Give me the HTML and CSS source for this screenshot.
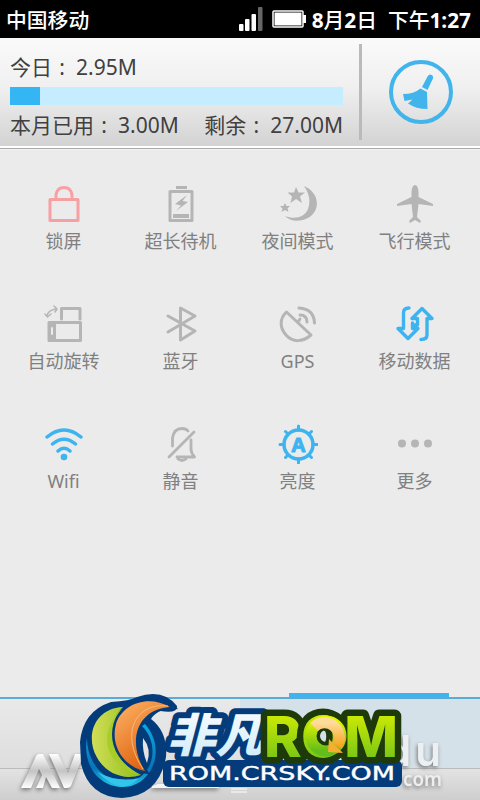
FILE: index.html
```html
<!DOCTYPE html>
<html lang="zh-CN">
<head>
  <meta charset="UTF-8" />
  <meta name="viewport" content="width=device-width, initial-scale=1.0"/>
  <title>流量与开关</title>
  <link rel="stylesheet" href="styles.css">
</head>
<body>

  <header class="status">
    <span>中国移动</span>
    <svg class="signal" width="25" height="26" viewBox="0 0 25 26">
      <g fill="#fff">
        <rect x="0" y="18" width="4.500" height="7" rx="1"/>
        <rect x="6" y="13" width="4.500" height="12" rx="1"/>
        <rect x="12.500" y="8" width="4.500" height="17" rx="1"/>
        <rect x="19" y="1" width="4.500" height="24" rx="1" fill="#666"/>
      </g>
    </svg>
    <svg class="battery" width="34" height="18" viewBox="0 0 34 18">
      <rect x="1" y="1" width="30" height="16" rx="1" fill="#000" stroke="#fff" stroke-width="1.5"/>
      <rect x="2.500" y="2.500" width="27" height="13" fill="#fff"/>
      <rect x="31" y="5" width="3" height="8" fill="#fff"/>
    </svg>
    <span class="clock">8<b>月</b>2<b>日</b>&nbsp; <b>下午</b>1:27</span>
  </header>

  <section class="usage">
    <div class="data">
      <p><span>今日<i>:</i>2.95M</span></p>
      <div class="bar"><div class="fill"></div></div>
      <p><span>本月已用<i>:</i>3.00M</span><span>剩余<i>:</i>27.00M</span></p>
    </div>
    <div class="clean">
      <svg width="64" height="64" viewBox="0 0 64 64">
        <circle cx="32" cy="32" r="30" fill="none" stroke="#42b4ec" stroke-width="4"/>
        <g fill="#42b4ec">
          <path d="M33 27 38.500 16.500Q40.500 13.500 43 15.200 45 16.500 43.500 19.500L38.500 30Z"/>
          <path d="M31.500 28.500 38 32 38.500 49Q27 49 19 43.500L23.500 39.500 15.500 41 14 34Q25 34 31.500 28.500Z"/>
        </g>
      </svg>
    </div>
  </section>

  <main class="switches">
    <div class="item red">
      <svg viewBox="0 0 40 40"><path d="M6 15.500H34V36.500H6ZM12 13V11Q13 3.500 20 3.500T28 11V13" stroke-width="3"/></svg>
      <span>锁屏</span>
    </div>
    <div class="item">
      <svg viewBox="0 0 40 40"><path d="M9 7.500H31V36.500H9Z" stroke-width="3"/><path class="solid" d="M15 2H26V5H15ZM12 30H28V34H12ZM26 11 14 20 20 21.500 15 27 27 18 21.500 17Z"/></svg>
      <span>超长待机</span>
    </div>
    <div class="item">
      <svg viewBox="0 0 40 40"><path class="solid" d="M26 2C38 7 43 20 35 30 28 38 13 39 7 32 17 36 27 33 30 25 33 17 31 9 26 2ZM18 3 20.500 8.500 27 8.500 22 12.500 24 19 18 15 12.500 19 14 12.500 9.500 8.500 16 8.500ZM7 19 8.500 22 12 22 9.500 24.500 10.500 28 7 26 3.500 28 4.500 24.500 2 22 5.500 22Z"/></svg>
      <span>夜间模式</span>
    </div>
    <div class="item">
      <svg viewBox="0 0 40 40"><path class="solid" d="M20 1Q23 1 23.500 8V13L38 20V22L23.500 20 22 33 26 37 25 39 20 36 15 39 14 37 18 33 16.500 20 2 22V20L16.500 13V8Q17 1 20 1Z"/></svg>
      <span>飞行模式</span>
    </div>

    <div class="item">
      <svg viewBox="0 0 40 40"><path d="M5 18.500H36.500V36.500H5ZM17.500 15V4.500H36V15" stroke-width="3"/><path class="solid" d="M4 18H12V37H4Z"/><path d="M3 12Q4 6 12 5M10 2 13 5 11 8M1 10 3.500 13 7 10" stroke-width="1.500"/><path d="M8 24V30" stroke="#ebebeb" stroke-width="2"/></svg>
      <span>自动旋转</span>
    </div>
    <div class="item">
      <svg viewBox="0 0 40 40"><path d="M7 12 34 27 19.500 36V4L34 12 7 28" stroke-width="3"/></svg>
      <span>蓝牙</span>
    </div>
    <div class="item">
      <svg viewBox="0 0 40 40"><path d="M8.500 8 33 31C25 38 15 39 8 31 1 23 2 14 8.500 8ZM20 18 22 15M22 11Q29 11 29 18M21 4Q36 5 36.500 19" stroke-width="3"/></svg>
      <span>GPS</span>
    </div>
    <div class="item blue">
      <svg viewBox="0 0 40 40"><path d="M14 4Q8.500 4 8.500 9V24.500H3L13 34.500 23 24.500H17.500V19M26 35.500Q32 35.500 32 31V14.500H37L27 4.500 17 14.500H22.500V21H18" stroke-width="3.400"/></svg>
      <span>移动数据</span>
    </div>

    <div class="item blue">
      <svg viewBox="0 0 40 40"><path d="M3 13Q20-1 37 13M8.500 20Q20 10.500 31.500 20M14 27Q20 21.500 26 27" stroke-width="3.500"/><circle class="solid" cx="20" cy="33" r="3.300"/></svg>
      <span>Wifi</span>
    </div>
    <div class="item">
      <svg viewBox="0 0 40 40"><path d="M33 8 8 33M11.500 22V14Q13 4.500 21 4.500 25 4.500 27 7M30 16V25Q30 29 33.500 33H16M17 35Q21 38 25 35" stroke-width="2.800"/></svg>
      <span>静音</span>
    </div>
    <div class="item blue">
      <svg viewBox="0 0 40 40"><circle cx="20.500" cy="20.500" r="14.500" stroke-width="3.500"/><path d="M20.500 2V6M20.500 35V39M2 20.500H6M35 20.500H39M7.500 7.500 10 10M31 31 33.500 33.500M33.500 7.500 31 10M10 31 7.500 33.500" stroke-width="3"/><text x="20.500" y="27.500" text-anchor="middle">A</text></svg>
      <span>亮度</span>
    </div>
    <div class="item">
      <svg viewBox="0 0 40 40"><g class="solid"><circle cx="7" cy="19.500" r="4"/><circle cx="20" cy="19.500" r="4"/><circle cx="33" cy="19.500" r="4"/></g></svg>
      <span>更多</span>
    </div>
  </main>

  <footer>
    <div class="tabs">
      <div class="tab"></div>
      <div class="tab active"></div>
    </div>
    <div class="handle"></div>
  </footer>

  <!-- logos laid over the bottom bar -->
  <svg class="marks" viewBox="0 680 480 120">
    <defs>
      <linearGradient id="silver" x2="0" y2="1"><stop offset="0" stop-color="#fff"/><stop offset=".5" stop-color="#c4c4c4"/><stop offset="1" stop-color="#fff"/></linearGradient>
      <linearGradient id="green" x2="0" y2="1"><stop offset="0" stop-color="#e4f500"/><stop offset="1" stop-color="#62bc1a"/></linearGradient>
      <linearGradient id="leaf"><stop offset="0" stop-color="#d0df57"/><stop offset="1" stop-color="#92bd1c"/></linearGradient>
      <linearGradient id="orange" x2=".6" y2="1"><stop offset="0" stop-color="#ffb568"/><stop offset="1" stop-color="#db5c09"/></linearGradient>
      <linearGradient id="gold" x2="0" y2="1"><stop offset="0" stop-color="#ffdc9a"/><stop offset="1" stop-color="#f6a51d"/></linearGradient>
      <linearGradient id="ice" x2="0" y2="1"><stop offset="0" stop-color="#fff"/><stop offset="1" stop-color="#cceafa"/></linearGradient>
      <linearGradient id="sea" x2="0" y2="1"><stop offset="0" stop-color="#0ba9e0"/><stop offset=".7" stop-color="#0874b8"/><stop offset="1" stop-color="#20c8ec"/></linearGradient>
    </defs>

    <g class="shade">
      <path fill="url(#silver)" d="M21 788 36 756Q37 754 39 754H43L60 788H52L46 777 43 788H36L42 775 39 769 31 788ZM49 754H58L68 773 75 754H84L71 786Q70 788 67 788H64Z"/>
      <path fill="#f4f4f4" d="M140 758 146 752 149 762H140ZM152 786 158 784H219V788H152Z"/>
      <text class="du" x="385" y="766" textLength="56">du</text>
      <text class="com" x="403" y="786" textLength="39" lengthAdjust="spacingAndGlyphs">com</text>
    </g>
    <path d="M231 789H247M231 792H247" stroke="#fff"/>

    <path fill="#043c7b" d="M80 742Q83 711 111 702 130 701 137 697 163 688 177 706 178 714 160 711 153 715 151 719 168 732 166 757 159 796 122 798 89 797 81 764Z"/>
    <path fill="url(#sea)" d="M87 738C82 765 99 787 123 787 151 787 168 750 145 724L142 726C162 746 152 782 124 782 104 782 87 762 87 738Z"/>
    <path fill="#e4e4e4" d="M143 738Q152 749 147 763 142 752 143 738Z"/>
    <path fill="#35c5e9" d="M97 772Q118 783 139 778 122 797 97 772Z"/>
    <path fill="url(#leaf)" d="M123 707C99 708 88 728 93 748 99 769 119 782 141 775 114 766 99 730 123 707Z"/>
    <path fill="#a9cd27" d="M123 707C93 738 109 767 141 775 116 763 103 735 123 707Z"/>
    <path fill="url(#orange)" stroke="#043c7b" stroke-width="5" paint-order="stroke" d="M170 707C148 694 122 704 116 724 110 746 124 767 145 771 127 743 136 709 170 707Z"/>
    <path fill="none" stroke="#f8bd7a" d="M168 706C136 702 119 733 143 769"/>

    <text class="name" x="167" y="752" textLength="97" lengthAdjust="spacingAndGlyphs">非凡</text>
    <rect x="163" y="760" width="239" height="27" rx="6" fill="#043c7b"/>
    <circle cx="326" cy="736" r="16" fill="none" stroke="#1e3a0b" stroke-width="20"/>
    <text class="rom" x="264" y="757" textLength="134">ROM</text>
    <circle cx="326" cy="736" r="15" fill="none" stroke="url(#green)" stroke-width="11"/>
    <path d="M314 727A15 15 0 0 1 337 746" fill="none" stroke="url(#gold)" stroke-width="11"/>
    <path fill="#f6ae32" d="M329 739 343 753 328 752Z"/>
    <text class="site" x="169" y="780" textLength="226" lengthAdjust="spacingAndGlyphs">ROM.CRSKY.COM</text>
  </svg>

</body>
</html>
```

FILE: styles.css
```css
body {
  margin: 0;
  width: 480px;
  height: 800px;
  position: relative;
  overflow: hidden;
  display: flex;
  flex-direction: column;
  background: #ebebeb;
  font-family: 'Noto Sans', 'Noto Sans CJK SC', sans-serif;
}

svg {
  display: block;
}

.status {
  height: 38px;
  box-sizing: border-box;
  padding: 0 9px 0 6px;
  background: #000;
  color: #fff;
  display: flex;
  align-items: center;
  font-size: 20.8px;
  font-weight: 500;
}

.signal {
  margin-left: auto;
}

.battery {
  margin: 0 6px 0 8px;
}

.clock {
  font-size: 20.8px;
  font-weight: 700;
  white-space: nowrap;
}

.clock b {
  font-weight: 500;
}

.usage {
  height: 108px;
  display: flex;
  background: linear-gradient(#fafafa, #f0f0f0 45%, #d3d3d3);
  border-bottom: 2px solid #fff;
  box-shadow: 0 1px 0 #aaa, 0 2px 0 #f4f4f4;
}

.data {
  width: 333px;
  padding: 14px 16px 0 10px;
}

.data p {
  margin: 0;
  height: 30px;
  line-height: 30px;
  display: flex;
  justify-content: space-between;
  font-size: 21px;
  color: #404040;
  white-space: nowrap;
}

.data i {
  display: inline-block;
  width: 24px;
  padding-right: 4px;
  box-sizing: border-box;
  text-align: center;
  font-style: normal;
}

.bar {
  height: 18px;
  margin: 5px 0;
  background: #c6ecff;
}

.fill {
  width: 30px;
  height: 18px;
  background: #34b6f4;
}

.clean {
  flex: 1;
  margin: 6px 0;
  border-left: 3px solid #bababa;
  display: flex;
  align-items: center;
  justify-content: center;
}

.switches {
  flex: 1;
  padding: 36px 5px 0;
  display: grid;
  grid-template-columns: repeat(4, 117px);
  grid-auto-rows: 120px;
  align-content: start;
}

.item {
  display: flex;
  flex-direction: column;
  align-items: center;
  color: #b5b5b5;
}

.item svg {
  width: 40px;
  height: 40px;
  fill: none;
  stroke: currentColor;
  stroke-linejoin: round;
  stroke-linecap: round;
}

.item .solid {
  fill: currentColor;
  stroke: none;
}

.item text {
  fill: currentColor;
  stroke: currentColor;
  stroke-width: 0.8;
  font-size: 20px;
  font-weight: 700;
}

.item span {
  margin-top: 4px;
  font-size: 18px;
  line-height: 26px;
  color: #808080;
}

.red {
  color: #f7a0a4;
}

.blue {
  color: #3db4f0;
}

footer {
  height: 107px;
}

.tabs {
  height: 75px;
  display: flex;
}

.tab {
  width: 240px;
  margin-top: 4px;
  border-top: 2px solid #5aabd8;
  background: linear-gradient(#e9e9e9, #dedede);
}

.active {
  position: relative;
  background: #d5e1e9;
}

.active::before {
  content: "";
  position: absolute;
  left: 49px;
  top: -6px;
  width: 160px;
  height: 5px;
  background: #41b4ef;
}

.handle {
  height: 32px;
  box-sizing: border-box;
  border-top: 1px solid #bbb;
  background: linear-gradient(#e3e3e3, #cecece);
}

.marks {
  position: absolute;
  left: 0;
  bottom: 0;
  width: 480px;
  height: 120px;
}

.shade {
  filter: drop-shadow(-1px 2px 2px #777);
}

.du {
  font-family: Inter, sans-serif;
  font-size: 42px;
  font-weight: 600;
  fill: #edf0f2;
}

.com {
  font-size: 19px;
  font-weight: 600;
  fill: #eee;
}

.name {
  font-family: 'Noto Sans CJK SC', sans-serif;
  font-size: 46px;
  font-weight: 900;
  font-style: italic;
  fill: url(#ice);
  stroke: #043c7b;
  stroke-width: 12;
  stroke-linejoin: round;
  paint-order: stroke;
}

.rom {
  font-family: Inter, sans-serif;
  font-size: 57px;
  font-weight: 800;
  fill: url(#green);
  stroke: #1e3a0b;
  stroke-width: 13;
  stroke-linejoin: round;
  paint-order: stroke;
}

.site {
  font-family: 'DejaVu Sans', sans-serif;
  font-size: 19px;
  fill: #fff;
  stroke: #fff;
  stroke-width: 0.4;
}
```
